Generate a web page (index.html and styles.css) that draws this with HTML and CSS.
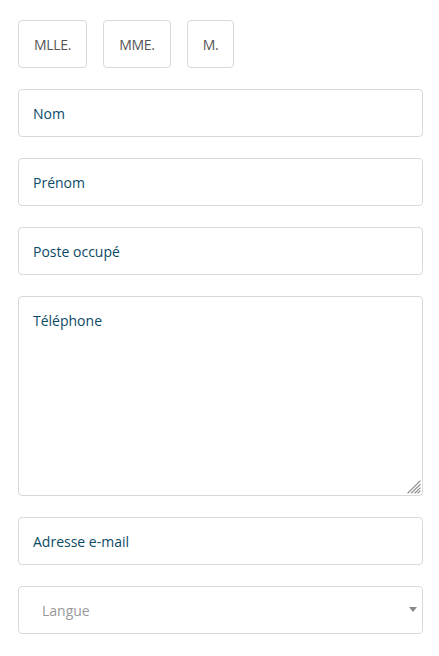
FILE: index.html
```html
<!DOCTYPE html>
<html lang="fr">
<head>
<meta charset="utf-8">
<link rel="stylesheet" href="styles.css">
</head>
<body>
<form class="form">
  <div class="titles">
    <button type="button" class="title-btn">MLLE.</button>
    <button type="button" class="title-btn">MME.</button>
    <button type="button" class="title-btn">M.</button>
  </div>
  <input class="field" type="text" placeholder="Nom">
  <input class="field" type="text" placeholder="Prénom">
  <input class="field" type="text" placeholder="Poste occupé">
  <div class="area-wrap">
    <textarea class="field area" placeholder="Téléphone"></textarea>
    <svg class="grip" width="14" height="14" viewBox="0 0 14 14">
      <g stroke="#8a8a8a" stroke-width="1.2" stroke-linecap="square">
        <path d="M1 13L13 1"/>
        <path d="M4.5 13L13 4.5"/>
        <path d="M8 13L13 8"/>
        <path d="M11 13L13 11"/>
      </g>
    </svg>
  </div>
  <input class="field" type="email" placeholder="Adresse e-mail">
  <div class="select-wrap">
    <select class="field select">
      <option>Langue</option>
    </select>
    <svg class="arrow" width="8" height="5" viewBox="0 0 8 5"><path d="M0 0h8L4 5z" fill="#888"/></svg>
  </div>
</form>
</body>
</html>
```
FILE: styles.css
```css
html, body {
  margin: 0;
  background: #fff;
}
body {
  font-family: "Open Sans", "Noto Sans", sans-serif;
  font-size: 14px;
}
.form {
  display: flex;
  flex-direction: column;
  gap: 21px;
  padding: 20px 16px 0 18px;
  width: 405px;
}
.titles {
  display: flex;
  gap: 16px;
}
.title-btn {
  height: 48px;
  padding: 0 15px;
  border: 1px solid #d9d9d9;
  border-radius: 4px;
  background: #fff;
  color: #555;
  font-family: inherit;
  font-size: 14px;
  letter-spacing: -0.3px;
}
.field {
  box-sizing: border-box;
  width: 405px;
  height: 48px;
  margin: 0;
  padding: 0 14px;
  border: 1px solid #d9d9d9;
  border-radius: 4px;
  background: #fff;
  color: #0b4a67;
  font-family: inherit;
  font-size: 14px;
  outline: none;
}
.field::placeholder {
  color: #0b4a67;
  opacity: 1;
}
.area-wrap {
  position: relative;
}
.area {
  height: 200px;
  padding: 14px;
  resize: none;
  display: block;
}
.grip {
  position: absolute;
  right: 2px;
  bottom: 2px;
}
.select-wrap {
  position: relative;
}
.select {
  appearance: none;
  -webkit-appearance: none;
  padding-left: 23px;
  color: #999;
  display: block;
}
.arrow {
  position: absolute;
  right: 6px;
  top: 21px;
}
```
